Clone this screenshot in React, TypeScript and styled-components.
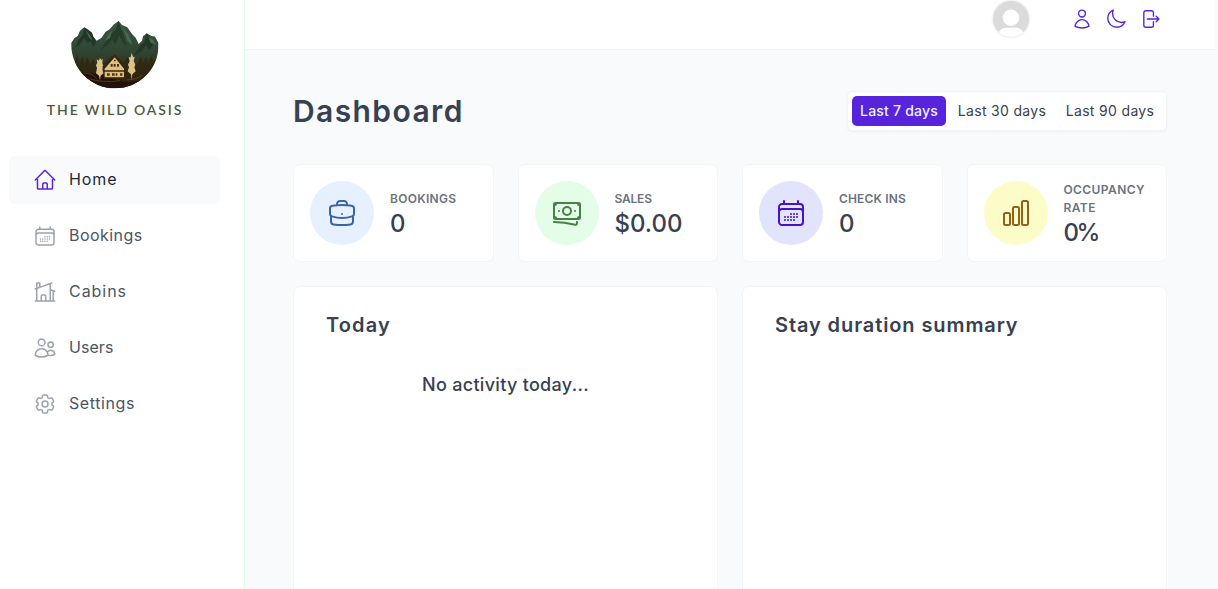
import React from "react";
import styled, { createGlobalStyle, css } from "styled-components";
import {
  HiOutlineHome,
  HiOutlineCalendarDays,
  HiOutlineHomeModern,
  HiOutlineUsers,
  HiOutlineCog6Tooth,
  HiOutlineUser,
  HiOutlineMoon,
  HiOutlineArrowRightOnRectangle,
  HiOutlineBriefcase,
  HiOutlineBanknotes,
  HiOutlineChartBar,
} from "react-icons/hi2";

const GlobalStyle = createGlobalStyle`
  *, *::before, *::after { box-sizing: border-box; margin: 0; padding: 0; }
  body {
    font-family: Inter, "Liberation Sans", sans-serif;
    font-size: 16px;
    line-height: 1.5;
    color: #374151;
    background: #f9fafb;
    overflow: hidden;
  }
  button { font: inherit; border: none; background: none; cursor: pointer; }
  ul { list-style: none; }
`;

const Layout = styled.div`
  display: grid;
  grid-template-columns: 245px 1fr;
  grid-template-rows: 50px 1fr;
  height: 100vh;
  overflow: hidden;
`;

const Sidebar = styled.aside`
  grid-row: 1 / -1;
  background: #fff;
  border-right: 1px solid #dcfce7;
  padding: 20px 24px 0 9px;
`;

const Logo = styled.div`
  display: flex;
  flex-direction: column;
  align-items: center;
  width: 212px;
  height: 136px;
`;

const LogoArt = styled.svg`
  display: block;
  width: 90px;
  height: 69px;
`;

const LogoName = styled.span`
  margin-top: 11px;
  font-family: Lato, sans-serif;
  font-size: 14px;
  font-weight: 600;
  line-height: 20px;
  letter-spacing: 1.85px;
  color: #4a5b40;
  white-space: nowrap;
`;

const NavList = styled.ul`
  display: flex;
  flex-direction: column;
  gap: 8px;
`;

const NavLink = styled.a<{ $active?: boolean; $track?: number }>`
  display: flex;
  align-items: center;
  gap: 12px;
  height: 48px;
  padding: 0 24px;
  border-radius: 5px;
  color: ${(p) => (p.$active ? "#1f2937" : "#4b5563")};
  background: ${(p) => (p.$active ? "#f9fafb" : "transparent")};
  letter-spacing: ${(p) => p.$track ?? 0}px;

  svg {
    width: 24px;
    height: 24px;
    color: ${(p) => (p.$active ? "#5724dc" : "#9ca3af")};
  }

  span {
    padding-bottom: 2px;
  }
`;

const Header = styled.header`
  display: flex;
  justify-content: flex-end;
  align-items: flex-start;
  gap: 40px;
  margin-right: 3px;
  padding-right: 54px;
  background: #fff;
  border-bottom: 1px solid #f1f3f5;
`;

const Avatar = styled.svg`
  display: block;
  width: 40px;
  height: 40px;
  margin-top: -1px;
`;

const HeaderMenu = styled.div`
  display: flex;
  gap: 12px;
  padding-top: 8px;
`;

const IconButton = styled.button`
  display: flex;
  color: #5724dc;

  svg {
    width: 22px;
    height: 22px;
  }
`;

const Main = styled.main`
  display: flex;
  flex-direction: column;
  padding: 41px 51px 0 48px;
  overflow: hidden;
`;

const TitleRow = styled.div`
  display: flex;
  justify-content: space-between;
  align-items: center;
  height: 40px;
  margin-bottom: 33px;
`;

const Title = styled.h1`
  font-size: 30px;
  font-weight: 600;
  line-height: 40px;
  letter-spacing: 1.4px;
  padding-bottom: 1px;
`;

const Filter = styled.div`
  display: flex;
  gap: 4px;
  padding: 4px;
  border: 1px solid #f3f4f6;
  border-radius: 5px;
  background: #fff;
  box-shadow: 0 1px 2px rgba(0, 0, 0, 0.04);
`;

const FilterButton = styled.button<{ $active?: boolean; $width: number }>`
  width: ${(p) => p.$width}px;
  height: 30px;
  padding-bottom: 2px;
  border-radius: 5px;
  font-size: 14px;
  font-weight: 400;
  letter-spacing: 0.33px;
  white-space: nowrap;
  color: #374151;
  ${(p) =>
    p.$active &&
    css`
      background: #5724dc;
      color: #eef2ff;
      font-weight: 500;
      letter-spacing: 0.2px;
    `}
`;

const panel = css`
  background: #fff;
  border: 1px solid #f3f4f6;
  border-radius: 7px;
`;

const Stats = styled.div`
  display: grid;
  grid-template-columns: repeat(4, 1fr);
  gap: 24px;
  margin-bottom: 24px;
`;

const StatCard = styled.div`
  ${panel}
  display: flex;
  align-items: center;
  gap: 16px;
  height: 98px;
  padding: 16px;
`;

const StatIcon = styled.div<{ $bg: string; $fg: string }>`
  display: flex;
  flex: none;
  align-items: center;
  justify-content: center;
  width: 64px;
  height: 64px;
  border-radius: 50%;
  background: ${(p) => p.$bg};
  color: ${(p) => p.$fg};

  svg {
    width: 32px;
    height: 32px;
  }
`;

const StatLabel = styled.h5<{ $track: number }>`
  font-size: 12px;
  font-weight: 600;
  line-height: 18px;
  letter-spacing: ${(p) => p.$track}px;
  text-transform: uppercase;
  color: #6b7280;
`;

const StatValue = styled.p<{ $track?: number }>`
  margin-bottom: -3px;
  font-size: 24px;
  font-weight: 500;
  line-height: 31px;
  letter-spacing: ${(p) => p.$track ?? 0}px;
`;

const Panels = styled.div`
  display: grid;
  grid-template-columns: 1fr 1fr;
  gap: 24px;
  flex: none;
`;

const Panel = styled.section`
  ${panel}
  height: 340px;
  padding: 23px 32px;
`;

const PanelTitle = styled.h2<{ $track: number }>`
  font-size: 20px;
  font-weight: 600;
  line-height: 30px;
  letter-spacing: ${(p) => p.$track}px;
`;

const Empty = styled.p`
  margin-top: 31px;
  font-size: 18px;
  font-weight: 500;
  line-height: 27px;
  letter-spacing: 0.3px;
  text-align: center;
`;

const navItems = [
  { label: "Home", icon: HiOutlineHome, active: true, track: 0.9 },
  { label: "Bookings", icon: HiOutlineCalendarDays, track: 0.45 },
  { label: "Cabins", icon: HiOutlineHomeModern, track: 0.95 },
  { label: "Users", icon: HiOutlineUsers, track: 0.05 },
  { label: "Settings", icon: HiOutlineCog6Tooth, track: 0.6 },
];

const stats = [
  { label: "Bookings", labelTrack: 0.3, value: "0", valueTrack: 0, icon: HiOutlineBriefcase, bg: "#e6f0fe", fg: "#3c63a6" },
  { label: "Sales", labelTrack: -0.2, value: "$0.00", valueTrack: 0, icon: HiOutlineBanknotes, bg: "#e4fde8", fg: "#448246" },
  { label: "Check ins", labelTrack: 0.15, value: "0", valueTrack: 0, icon: HiOutlineCalendarDays, bg: "#e2e3fd", fg: "#4714c4" },
  { label: "Occupancy rate", labelTrack: 0.4, value: "0%", valueTrack: -2.4, icon: HiOutlineChartBar, bg: "#fcfcc9", fg: "#946118" },
];

function MountainLogo() {
  return (
    <LogoArt viewBox="90 30 270 207" aria-hidden="true">
      <defs>
        <linearGradient id="hill" x1="0" y1="0" x2="0" y2="1">
          <stop offset="0" stopColor="#3a5740" />
          <stop offset="0.45" stopColor="#2f4632" />
          <stop offset="0.7" stopColor="#33301a" />
          <stop offset="1" stopColor="#2c170c" />
        </linearGradient>
        <clipPath id="bowl">
          <path d="M94 98 L104 84 L113 78 L120 62 L133 52 L145 59 L156 68 L160 80 L170 92 L184 84 L197 65 L209 58 L222 43 L236 33 L246 45 L262 52 L276 72 L287 83 L296 102 L306 92 L309 79 L320 70 L333 77 L345 80 L355 98 C360 173 300 235 226 235 C151 235 91 173 94 98Z" />
        </clipPath>
      </defs>
      <g clipPath="url(#bowl)">
        <rect x="90" y="30" width="270" height="207" fill="url(#hill)" />
        <path d="M133 52 L128 76 L116 90 L108 112 L124 98 L132 84 L143 100 L152 92 L160 112 L168 96 L156 68Z" fill="#233527" />
        <path d="M236 33 L228 58 L212 74 L196 96 L180 122 L202 106 L216 88 L226 104 L238 76 L248 98 L262 110 L252 78 L244 58Z" fill="#273b2b" />
        <path d="M320 70 L314 96 L298 112 L280 138 L304 124 L318 104 L328 120 L340 104 L334 88Z" fill="#233527" />
        <path d="M240 46 L254 66 L262 92 L278 106 L266 74Z M136 60 L150 76 L158 92 L148 84Z M324 80 L338 88 L348 104 L332 98Z M206 72 L216 62 L210 84 L194 94Z" fill="#48694e" />
        <path d="M90 170 L98 142 L104 162 L112 136 L119 160 L127 140 L134 164 L142 142 L150 164 L160 148 L170 168 L190 160 L216 138 L250 160 L262 142 L290 166 L302 140 L309 162 L318 138 L325 160 L333 136 L341 158 L350 140 L360 170 V215 H90Z" fill="#30260f" opacity="0.75" />
        <path d="M90 192 Q160 180 220 206 T360 190 V240 H90Z" fill="#241208" />
        <path d="M132 190 Q156 188 170 206 M146 206 Q190 220 240 212 M260 210 Q292 208 306 196" fill="none" stroke="#6b4c28" strokeWidth="2" />
        <path d="M180 144 L184 150 L188 146 L187 160 L191 170 L187 176 L190 190 L182 197 L180 210 L177 197 L168 190 L171 174 L168 166 L172 158 L170 148 L176 152Z M275 128 L279 140 L284 142 L281 152 L286 164 L283 172 L287 184 L277 193 L275 210 L273 193 L263 184 L267 172 L264 164 L269 154 L266 142 L272 142Z" fill="#dcc287" />
        <path d="M194 176 L224 142 L252 176 V203 H194Z" fill="#dfbf80" />
        <path d="M188 172 L225 137 L258 168 M192 183 H257 M191 204 H258" fill="none" stroke="#3b2412" strokeWidth="5" />
        <path d="M212 162h6v8h-6z M221 162h6v8h-6z M231 162h6v8h-6z M201 190h8v7h-8z M216 190h8v7h-8z M227 190h5v7h-5z M240 190h7v7h-7z M222 149h5v5h-5z" fill="#4d321a" />
      </g>
    </LogoArt>
  );
}

function DefaultAvatar() {
  return (
    <Avatar viewBox="0 0 40 40" aria-hidden="true">
      <defs>
        <clipPath id="face">
          <circle cx="20" cy="20" r="18" />
        </clipPath>
      </defs>
      <circle cx="20" cy="20" r="19.5" fill="#f3f4f6" />
      <g clipPath="url(#face)">
        <rect width="40" height="40" fill="#dbdbdb" />
        <circle cx="20" cy="18.7" r="8.2" fill="#fff" />
        <path d="M8 38 V33 Q10 29 15 28.8 H25 Q30 29 32 33 V38Z" fill="#fff" />
      </g>
    </Avatar>
  );
}

export default function App() {
  return (
    <>
      <GlobalStyle />
      <Layout>
        <Sidebar>
          <Logo>
            <MountainLogo />
            <LogoName>THE WILD OASIS</LogoName>
          </Logo>
          <nav>
            <NavList>
              {navItems.map(({ label, icon: Icon, active, track }) => (
                <li key={label}>
                  <NavLink $active={active} $track={track}>
                    <Icon />
                    <span>{label}</span>
                  </NavLink>
                </li>
              ))}
            </NavList>
          </nav>
        </Sidebar>

        <Header>
          <DefaultAvatar />
          <HeaderMenu>
            <IconButton aria-label="Account"><HiOutlineUser /></IconButton>
            <IconButton aria-label="Dark mode"><HiOutlineMoon /></IconButton>
            <IconButton aria-label="Log out"><HiOutlineArrowRightOnRectangle /></IconButton>
          </HeaderMenu>
        </Header>

        <Main>
          <TitleRow>
            <Title>Dashboard</Title>
            <Filter>
              <FilterButton $active $width={94}>Last 7 days</FilterButton>
              <FilterButton $width={104}>Last 30 days</FilterButton>
              <FilterButton $width={104}>Last 90 days</FilterButton>
            </Filter>
          </TitleRow>

          <Stats>
            {stats.map(({ label, labelTrack, value, valueTrack, icon: Icon, bg, fg }) => (
              <StatCard key={label}>
                <StatIcon $bg={bg} $fg={fg}>
                  <Icon />
                </StatIcon>
                <div>
                  <StatLabel $track={labelTrack}>{label}</StatLabel>
                  <StatValue $track={valueTrack}>{value}</StatValue>
                </div>
              </StatCard>
            ))}
          </Stats>

          <Panels>
            <Panel>
              <PanelTitle $track={1.15}>Today</PanelTitle>
              <Empty>No activity today...</Empty>
            </Panel>
            <Panel>
              <PanelTitle $track={0.9}>Stay duration summary</PanelTitle>
            </Panel>
          </Panels>
        </Main>
      </Layout>
    </>
  );
}
